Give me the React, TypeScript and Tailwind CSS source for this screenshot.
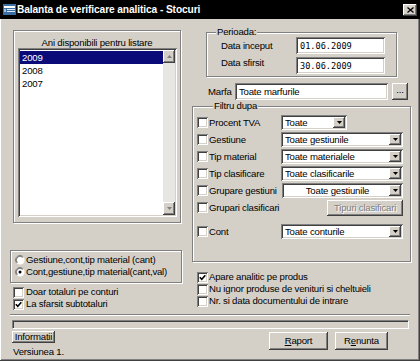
import React from "react";

const raised =
  "shadow-[inset_-1px_-1px_0_#404040,inset_1px_1px_0_#ffffff,inset_-2px_-2px_0_#808080,inset_2px_2px_0_#d4d0c8]";
const sunken =
  "shadow-[inset_1px_1px_0_#808080,inset_-1px_-1px_0_#ffffff,inset_2px_2px_0_#404040,inset_-2px_-2px_0_#d4d0c8]";
const etched = "border border-[#808080] shadow-[inset_1px_1px_0_#ffffff,1px_1px_0_#ffffff]";

function Check({ on = false }: { on?: boolean }) {
  return (
    <span className={`flex h-[11px] w-[11px] shrink-0 items-center justify-center bg-white ${sunken}`}>
      {on && (
        <svg width="7" height="7" viewBox="0 0 7 7">
          <path d="M0.8 3.2 L2.8 5.3 L6.3 1.3" fill="none" stroke="#000" strokeWidth="1.6" />
        </svg>
      )}
    </span>
  );
}

function Radio({ on = false }: { on?: boolean }) {
  return (
    <svg width="10" height="10" viewBox="0 0 12 12" className="shrink-0">
      <circle cx="6" cy="6" r="5.5" fill="#fff" />
      <path d="M9.9 2.1 A5.5 5.5 0 0 0 2.1 9.9" fill="none" stroke="#808080" />
      <path d="M9.2 2.8 A4.5 4.5 0 0 0 2.8 9.2" fill="none" stroke="#404040" />
      {on && <circle cx="6" cy="6" r="1.8" fill="#000" />}
    </svg>
  );
}

function Tri({ up = false, color = "#000" }: { up?: boolean; color?: string }) {
  return (
    <svg width="5" height="3" viewBox="0 0 5 3">
      <path d={up ? "M2.5 0L5 3H0z" : "M0 0h5L2.5 3z"} fill={color} />
    </svg>
  );
}

function Select({ value, className, center }: { value: string; className: string; center?: boolean }) {
  return (
    <div className={`flex h-[15px] shrink-0 items-center bg-white p-[2px] ${sunken} ${className}`}>
      <span className={`flex-1 truncate pl-[2px] leading-[11px] ${center ? "text-center" : ""}`}>{value}</span>
      <span className={`flex h-[11px] w-[12px] items-center justify-center bg-[#d4d0c8] ${raised}`}>
        <Tri />
      </span>
    </div>
  );
}

function FilterRow({ label, children, labelW }: { label: string; children?: React.ReactNode; labelW: string }) {
  return (
    <div className="flex h-[17px] items-center pl-[4px] pr-[7px]">
      <Check />
      <span className={`ml-[1px] shrink-0 ${labelW}`}>{label}</span>
      {children}
    </div>
  );
}

export default function App() {
  const years = ["2009", "2008", "2007"];

  return (
    <div
      className={`relative h-[361px] w-[420px] overflow-hidden bg-[#d4d0c8] font-['Liberation_Sans',Arial,sans-serif] text-[9.6px] leading-[12px] tracking-[-0.2px] text-black ${raised}`}
    >
      {/* title bar */}
      <div className="flex h-[19px] items-center bg-black pl-[3px] pr-[3px]">
        <svg width="13" height="11" viewBox="0 0 13 11" className="shrink-0">
          <rect x="0" y="0" width="13" height="11" fill="#3a6ea5" />
          <rect x="1" y="2" width="11" height="2" fill="#fff" />
          <rect x="4" y="5" width="8" height="1" fill="#dfe8f3" />
          <rect x="4" y="7" width="8" height="1" fill="#dfe8f3" />
          <rect x="1" y="5" width="2" height="3" fill="#9fc0e0" />
        </svg>
        <span className="ml-[1px] text-[10.2px] font-bold tracking-[-0.1px] text-white">
          Balanta de verificare analitica - Stocuri
        </span>
        <span className={`ml-auto flex h-[12px] w-[14px] items-center justify-center bg-[#d4d0c8] ${raised}`}>
          <svg width="7" height="6" viewBox="0 0 7 6">
            <path d="M0.5 0.5L6.5 5.5M6.5 0.5L0.5 5.5" stroke="#000" strokeWidth="1.3" />
          </svg>
        </span>
      </div>

      {/* columns */}
      <div className="flex h-[291px] pl-[10px]">
        {/* left */}
        <div className="flex w-[172px] flex-col">
          <div className={`ml-[3px] mt-[11px] flex h-[193px] w-[168px] flex-col ${etched}`}>
            <div className="mt-[6px] h-[11px] text-center leading-[11px]">Ani disponibili pentru listare</div>
            <div className={`ml-[4px] flex h-[169px] w-[159px] bg-white p-[2px] ${sunken}`}>
              <div className="flex-1 pt-[1px]">
                {years.map((y, i) => (
                  <div
                    key={y}
                    className={`h-[13px] pl-[2px] leading-[13px] ${i === 0 ? "bg-[#0a0a78] text-white" : ""}`}
                  >
                    {y}
                  </div>
                ))}
              </div>
              <div className="flex w-[12px] flex-col justify-between bg-[#e8e6e2]">
                <span className={`flex h-[13px] items-center justify-center bg-[#d4d0c8] ${raised}`}>
                  <Tri up color="#808080" />
                </span>
                <span className={`flex h-[13px] items-center justify-center bg-[#d4d0c8] ${raised}`}>
                  <Tri color="#808080" />
                </span>
              </div>
            </div>
          </div>

          <div className={`mt-[27px] h-[33px] w-[172px] pt-[3px] ${etched}`}>
            <div className="flex h-[12px] items-center pl-[4px]">
              <Radio />
              <span className="ml-[1px]">Gestiune,cont,tip material (cant)</span>
            </div>
            <div className="flex h-[12px] items-center pl-[4px]">
              <Radio on />
              <span className="ml-[1px]">Cont,gestiune,tip material(cant,val)</span>
            </div>
          </div>

          <div className="mt-[3px] flex h-[12px] items-center pl-[3px]">
            <Check />
            <span className="ml-[2px]">Doar totaluri pe conturi</span>
          </div>
          <div className="flex h-[12px] items-center pl-[3px]">
            <Check on />
            <span className="ml-[2px]">La sfarsit subtotaluri</span>
          </div>
        </div>

        {/* right */}
        <div className="ml-[10px] flex w-[219px] flex-col">
          <div className={`relative ml-[14px] mt-[13px] h-[45px] w-[191px] pl-[14px] pt-[4px] ${etched}`}>
            <span className="absolute -top-[7px] left-[9px] bg-[#d4d0c8] px-[1px]">Perioada:</span>
            <div className="flex h-[17px] items-center">
              <span className="w-[75px] shrink-0">Data inceput</span>
              <div
                className={`flex h-[17px] w-[89px] items-center bg-white pl-[4px] font-['DejaVu_Sans_Mono',monospace] text-[8.6px] tracking-normal ${sunken}`}
              >
                01.06.2009
              </div>
            </div>
            <div className="mt-[3px] flex h-[17px] items-center">
              <span className="-mt-[5px] w-[75px] shrink-0">Data sfirsit</span>
              <div
                className={`flex h-[17px] w-[89px] items-center bg-white pl-[4px] font-['DejaVu_Sans_Mono',monospace] text-[8.6px] tracking-normal ${sunken}`}
              >
                30.06.2009
              </div>
            </div>
          </div>

          <div className="ml-[16px] mt-[6px] flex h-[17px] items-center">
            <span className="w-[27px] shrink-0">Marfa</span>
            <div className={`flex h-[17px] w-[153px] items-center bg-white pl-[4px] ${sunken}`}>Toate marfurile</div>
            <span className={`ml-[4px] flex h-[17px] w-[16px] items-center justify-center bg-[#d4d0c8] pb-[3px] ${raised}`}>
              ...
            </span>
          </div>

          <div className={`relative mt-[6px] h-[156px] w-[219px] pt-[7px] ${etched}`}>
            <span className="absolute -top-[7px] left-[20px] bg-[#d4d0c8] px-[1px]">Filtru dupa</span>
            <FilterRow label="Procent TVA" labelW="w-[72px]">
              <Select value="Toate" className="w-[66px]" />
            </FilterRow>
            <FilterRow label="Gestiune" labelW="w-[72px]">
              <Select value="Toate gestiunile" className="w-[122px]" />
            </FilterRow>
            <FilterRow label="Tip material" labelW="w-[72px]">
              <Select value="Toate materialele" className="w-[122px]" />
            </FilterRow>
            <FilterRow label="Tip clasificare" labelW="w-[72px]">
              <Select value="Toate clasificarile" className="w-[122px]" />
            </FilterRow>
            <FilterRow label="Grupare gestiuni" labelW="w-[73px]">
              <Select value="Toate gestiunile" className="w-[121px]" center />
            </FilterRow>
            <FilterRow label="Grupari clasificari" labelW="w-[90px]">
              <span
                className={`ml-auto flex h-[16px] w-[76px] items-center justify-center bg-[#d4d0c8] text-[#808080] [text-shadow:1px_1px_0_#fff] ${raised}`}
              >
                Tipuri clasificari
              </span>
            </FilterRow>
            <div className="mt-[7px]">
              <FilterRow label="Cont" labelW="w-[72px]">
                <Select value="Toate conturile" className="w-[122px]" />
              </FilterRow>
            </div>
          </div>

          <div className="mt-[9px] flex h-[12px] items-center pl-[5px]">
            <Check on />
            <span className="ml-[1px]">Apare analitic pe produs</span>
          </div>
          <div className="flex h-[12px] items-center pl-[5px]">
            <Check />
            <span className="ml-[1px]">Nu ignor produse de venituri si cheltuieli</span>
          </div>
          <div className="flex h-[12px] items-center pl-[5px]">
            <Check />
            <span className="ml-[1px]">Nr. si data documentului de intrare</span>
          </div>
        </div>
      </div>

      {/* bottom */}
      <div className="mx-[10px] mt-[4px] h-[2px] border-b border-t border-b-white border-t-[#808080]" />
      <div className="ml-[12px] mt-[4px] h-[9px] w-[397px] border border-[#808080] border-b-white border-r-white shadow-[inset_1px_1px_0_#404040]" />
      <div className="mt-[2px] flex">
        <div className="flex w-[43px] shrink-0 flex-col pl-[12px] box-content">
          <span className={`flex h-[12px] w-[43px] items-center justify-center bg-[#d4d0c8] ${raised}`}>Informatii</span>
          <span className="ml-[1px] mt-[3px] whitespace-nowrap">Versiunea 1.</span>
        </div>
        <span className={`ml-[214px] mt-[1px] flex h-[18px] w-[59px] items-center justify-center bg-[#d4d0c8] ${raised}`}>
          <span>
            <u>R</u>aport
          </span>
        </span>
        <span className={`ml-[7px] mt-[1px] flex h-[18px] w-[53px] items-center justify-center bg-[#d4d0c8] ${raised}`}>
          <span>
            R<u>e</u>nunta
          </span>
        </span>
      </div>
    </div>
  );
}
